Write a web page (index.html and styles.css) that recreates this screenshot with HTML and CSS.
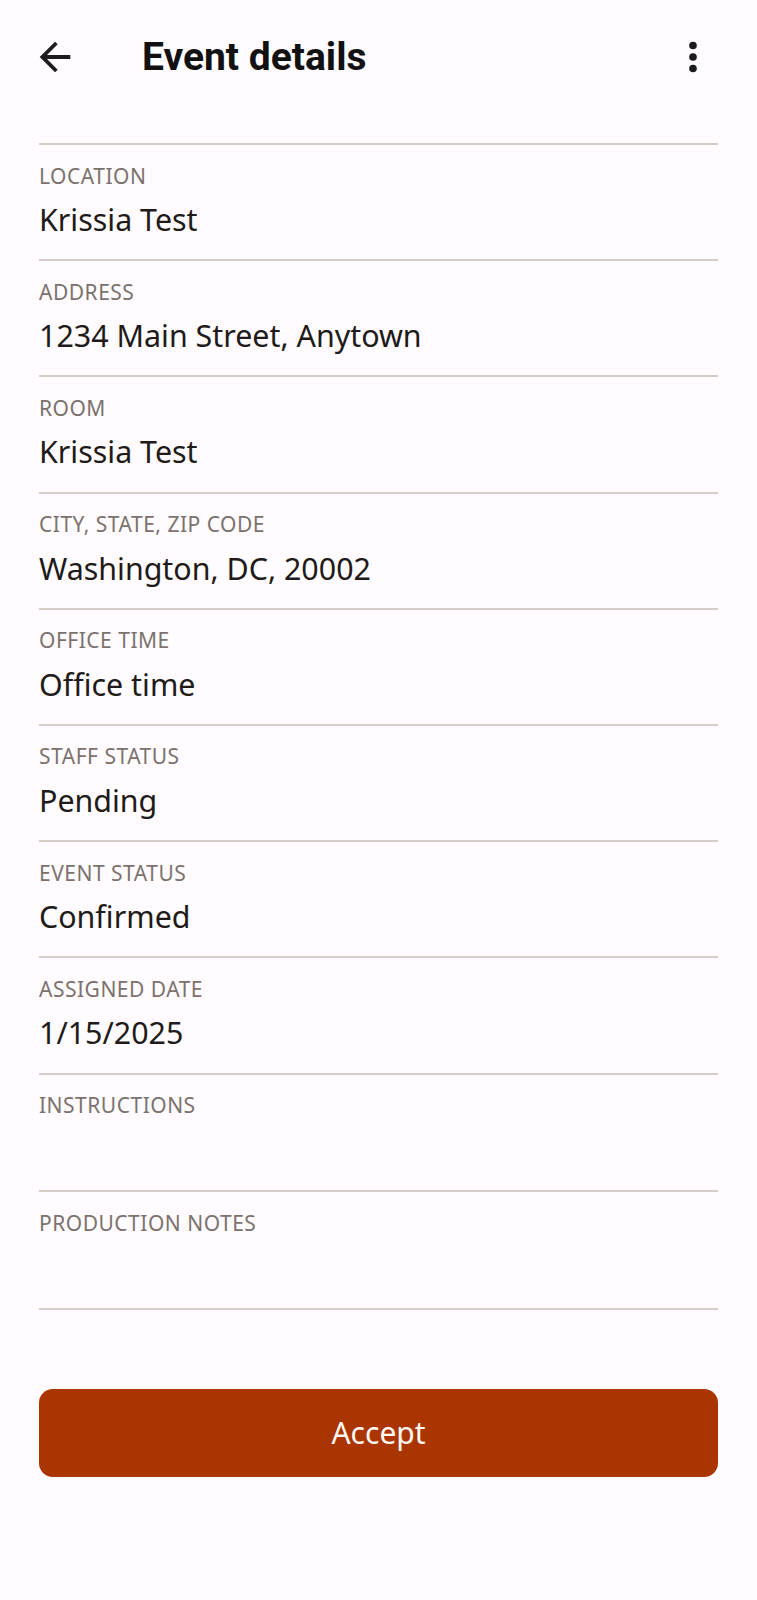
FILE: index.html
```html
<!DOCTYPE html>
<html lang="en">
<head>
    <meta charset="UTF-8">
    <meta name="viewport" content="width=device-width, initial-scale=1.0">
    <title>Event details</title>
    <link rel="stylesheet" href="styles.css">
</head>
<body>

    <header class="top-bar">
        <button class="icon-btn" type="button" aria-label="Back">
            <svg viewBox="0 0 24 24"><path d="M20 11H7.83l5.59-5.59L12 4l-8 8 8 8 1.41-1.41L7.83 13H20v-2z"/></svg>
        </button>
        <h1 class="title">Event details</h1>
        <button class="icon-btn more" type="button" aria-label="More">
            <svg viewBox="0 0 24 24"><circle cx="12" cy="6" r="2"/><circle cx="12" cy="12" r="2"/><circle cx="12" cy="18" r="2"/></svg>
        </button>
    </header>

    <main class="content">
        <dl class="details">
            <div class="detail-row">
                <dt>Location</dt>
                <dd>Krissia Test</dd>
            </div>
            <div class="detail-row">
                <dt>Address</dt>
                <dd>1234 Main Street, Anytown</dd>
            </div>
            <div class="detail-row">
                <dt>Room</dt>
                <dd>Krissia Test</dd>
            </div>
            <div class="detail-row">
                <dt>City, State, Zip Code</dt>
                <dd>Washington, DC, 20002</dd>
            </div>
            <div class="detail-row">
                <dt>Office Time</dt>
                <dd>Office time</dd>
            </div>
            <div class="detail-row">
                <dt>Staff Status</dt>
                <dd>Pending</dd>
            </div>
            <div class="detail-row">
                <dt>Event Status</dt>
                <dd>Confirmed</dd>
            </div>
            <div class="detail-row">
                <dt>Assigned Date</dt>
                <dd>1/15/2025</dd>
            </div>
            <div class="detail-row">
                <dt>Instructions</dt>
                <dd></dd>
            </div>
            <div class="detail-row">
                <dt>Production Notes</dt>
                <dd></dd>
            </div>
        </dl>

        <button class="accept-btn" type="button">Accept</button>
    </main>

</body>
</html>
```

FILE: styles.css
```css
body {
    margin: 0;
    padding: 0;
    background-color: #fffbfe;
    color: #201a18;
    font-family: "Noto Sans", "Open Sans", sans-serif;
}

.top-bar {
    display: flex;
    align-items: center;
    height: 114px;
    padding: 0 41px 0 32px;
}

.icon-btn {
    width: 46px;
    height: 46px;
    padding: 0;
    border: none;
    background: none;
    cursor: pointer;
}

    .icon-btn svg {
        display: block;
        width: 46px;
        height: 46px;
        fill: #1c1b1f;
    }

.title {
    flex: 1;
    margin: 0 0 0 64px;
    font-family: Roboto, sans-serif;
    font-size: 39px;
    font-weight: 700;
    color: #111;
}

.content {
    padding: 29px 39px 0 39px;
}

.details {
    margin: 0;
    border-bottom: 2px solid #d8ccc8;
}

.detail-row {
    display: flex;
    flex-direction: column;
    gap: 10.5px;
    padding: 16.5px 0 19.2px;
    border-top: 2px solid #d8ccc8;
}

    .detail-row dt {
        font-size: 21px;
        line-height: 28px;
        letter-spacing: 0.5px;
        text-transform: uppercase;
        color: #7b726e;
    }

    .detail-row dd {
        margin: 0;
        min-height: 40px;
        font-size: 30.4px;
        line-height: 40px;
    }

        .detail-row dd:empty {
            min-height: 41.5px;
        }

.accept-btn {
    display: block;
    width: 100%;
    height: 88px;
    margin-top: 79px;
    border: none;
    border-radius: 14px;
    background-color: #ab3500;
    color: #fff8f4;
    font-family: "Noto Sans", sans-serif;
    font-size: 30px;
    cursor: pointer;
}
```
